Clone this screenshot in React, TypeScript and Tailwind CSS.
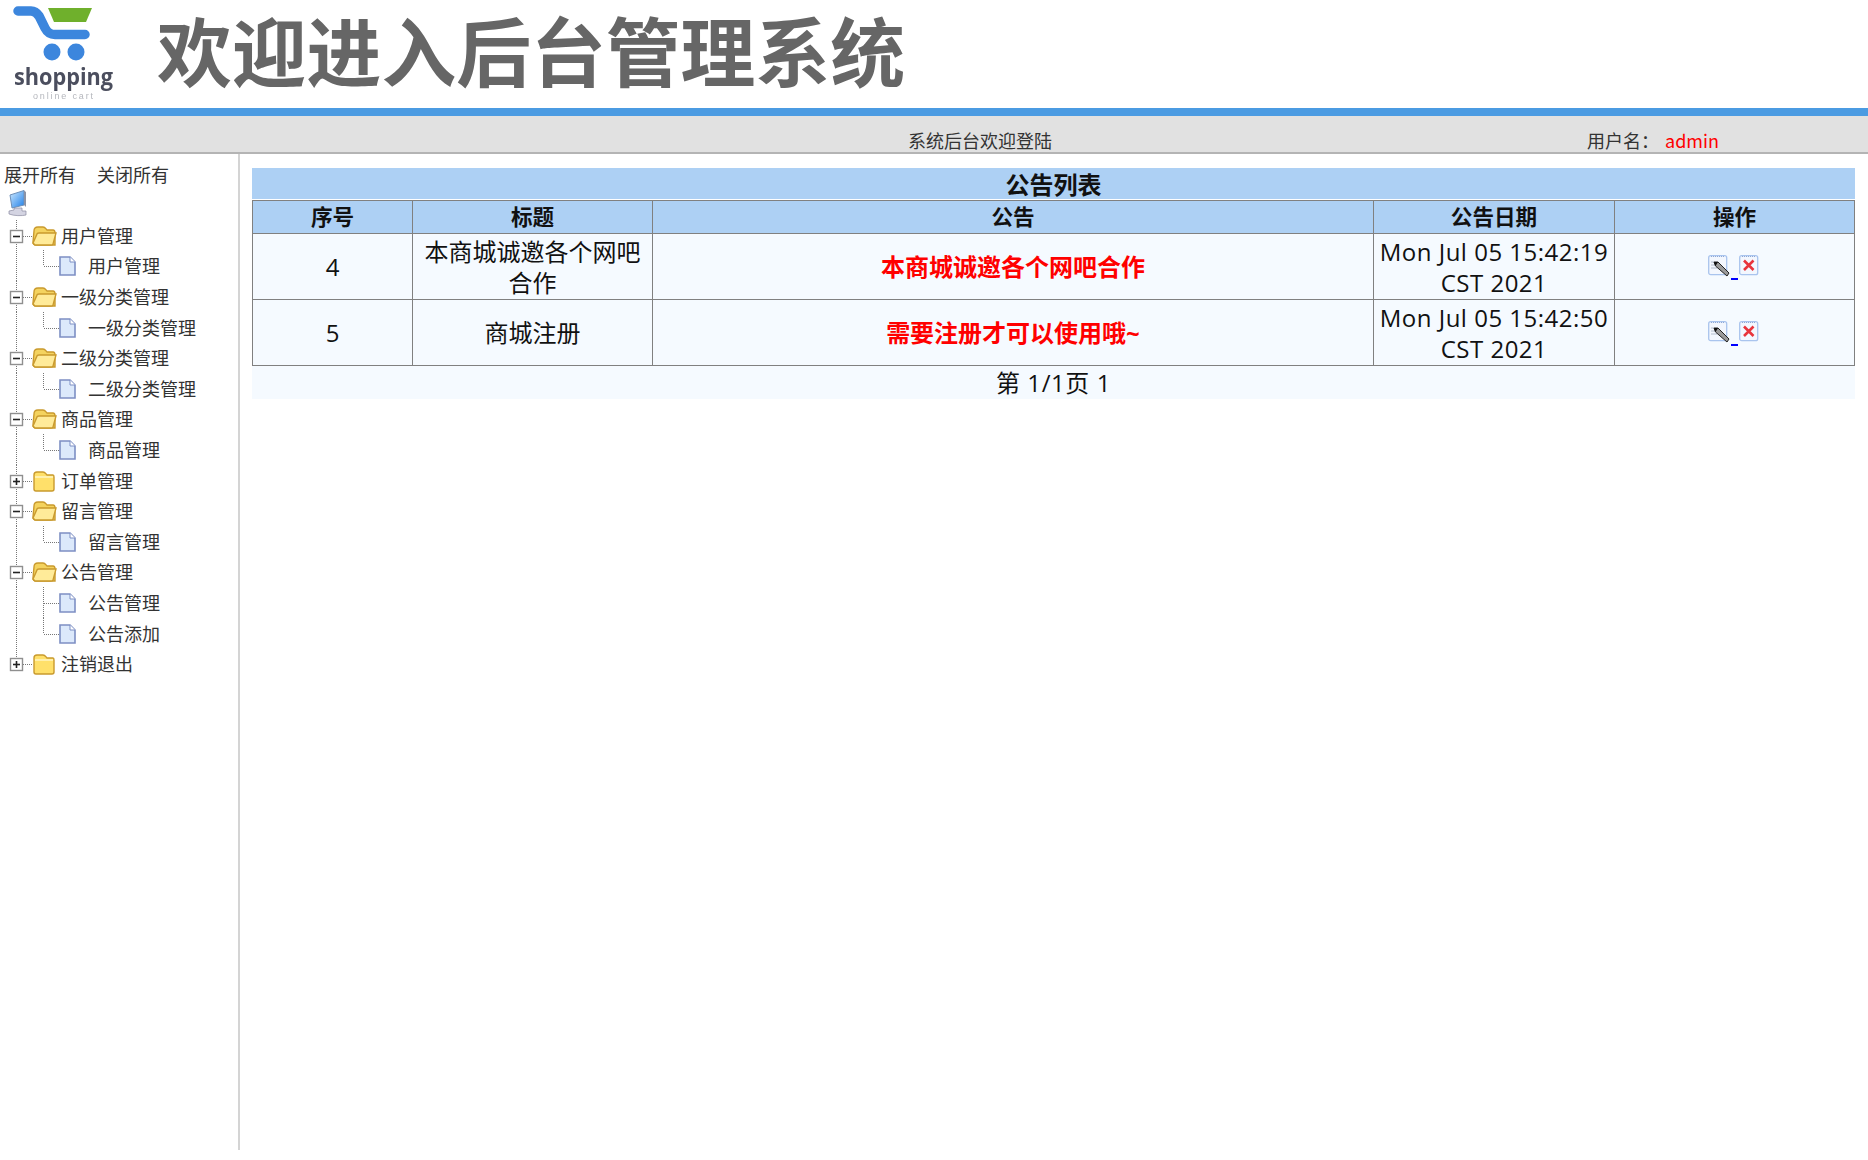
import React from 'react';

const CJK = 'font-["Noto_Sans_CJK_SC","Noto_Sans",sans-serif]';

function Logo() {
    return (
        <svg width="130" height="108" viewBox="0 0 130 108" className="shrink-0 blur-[0.4px]">
            <path d="M48 8H92L86 22H54Z" fill="#6fb02c" />
            <path d="M18 11H31C35 11 37 13 39 16L45 28C47 32 50 34.5 55 34.5H85" fill="none" stroke="#3c86dd" strokeWidth="9.5" strokeLinecap="round" />
            <circle cx="52" cy="52" r="8.5" fill="#3c86dd" />
            <circle cx="76" cy="52" r="8.5" fill="#3c86dd" />
            <text x="14" y="85" fontFamily="Open Sans" fontWeight="700" fontSize="23.5" fill="#4b4e5e" textLength="99" lengthAdjust="spacingAndGlyphs">shopping</text>
            <text x="33" y="99" fontFamily="Liberation Sans" fontSize="9" fill="#b5b7bd" textLength="60">online cart</text>
        </svg>
    );
}

function Computer() {
    return (
        <svg width="20" height="27" viewBox="0 0 20 27">
            <defs>
                <linearGradient id="scr" x1="0" y1="0" x2="1" y2="1">
                    <stop offset="0" stopColor="#cfeaff" />
                    <stop offset="1" stopColor="#1f7fe8" />
                </linearGradient>
            </defs>
            <path d="M2 5L16 0.5V15L4 18Z" fill="url(#scr)" stroke="#6d8fb8" strokeWidth="1" />
            <path d="M16 0.5L18 2V17L16 15Z" fill="#8b93a6" />
            <path d="M6 18H14V21H18V25C14 26 6 26 1 24V21L6 20Z" fill="#d4d4e2" stroke="#8b8ba0" strokeWidth="0.7" />
        </svg>
    );
}

function Folder({ open }: { open: boolean }) {
    return open ? (
        <g>
            <path d="M34 11C34 8 36 7 38 7H43C45 7 46 9 47 10H53C54 10 55 11 55 13V25H36C34 25 33 24 33 22Z" fill="#f4d35f" stroke="#c99a2e" strokeWidth="1.4" />
            <path d="M33 23L37 14C37 13 38 13 39 13H56L53 24C53 25 52 25 51 25H35Z" fill="#ffeb99" stroke="#c99a2e" strokeWidth="1.4" />
        </g>
    ) : (
        <g>
            <path d="M34 10C34 8 35 7 37 7H43C45 7 46 9 47 10H53C54 10 54 11 54 12V24C54 25 53 26 52 26H36C35 26 34 25 34 24Z" fill="#ffe06a" stroke="#c99a2e" strokeWidth="1.4" />
            <path d="M35 12H53" stroke="#fff6c4" strokeWidth="1.5" />
        </g>
    );
}

function GroupRow({ label, open, last }: { label: string; open: boolean; last?: boolean }) {
    return (
        <div className="flex h-[30.6px] items-center">
            <svg width="61" height="31" viewBox="0 0 61 31" className="shrink-0">
                <path d={last ? 'M16.5 0V15' : 'M16.5 0V31'} stroke="#777" strokeDasharray="1 1" />
                <path d="M23 16.5H33" stroke="#777" strokeDasharray="1 1" />
                <rect x="10.5" y="10.5" width="12" height="12" fill="#fff" stroke="#8f8f8f" strokeWidth="1.4" />
                <path d="M13 16.5H20" stroke="#222" strokeWidth="1.6" />
                {!open && <path d="M16.5 13V20" stroke="#222" strokeWidth="1.6" />}
                <Folder open={open} />
            </svg>
            <span className="whitespace-nowrap">{label}</span>
        </div>
    );
}

function PageRow({ label, more }: { label: string; more?: boolean }) {
    return (
        <div className="flex h-[30.6px] items-center">
            <svg width="88" height="31" viewBox="0 0 88 31" className="shrink-0">
                <path d="M16.5 0V31" stroke="#777" strokeDasharray="1 1" />
                <path d={more ? 'M43.5 0V31' : 'M43.5 0V16'} stroke="#777" strokeDasharray="1 1" />
                <path d="M44 16.5H59" stroke="#777" strokeDasharray="1 1" />
                <path d="M60 7H70L75 12V25H60Z" fill="#dce9fb" stroke="#7d8fc4" strokeWidth="1.6" />
                <path d="M70 7V12H75" fill="#fff" stroke="#7d8fc4" strokeWidth="1" />
            </svg>
            <span className="whitespace-nowrap">{label}</span>
        </div>
    );
}

function Sidebar() {
    return (
        <aside className="h-[996px] w-[240px] shrink-0 border-r-2 border-[#d4d4d4] text-[18px] text-[#333]">
            <div className="flex gap-[21px] pl-1 pt-[6px] leading-[28px]">
                <span>展开所有</span>
                <span>关闭所有</span>
            </div>
            <div className="h-[32px] pl-[8px] pt-[2px]">
                <Computer />
            </div>
            <GroupRow label="用户管理" open />
            <PageRow label="用户管理" />
            <GroupRow label="一级分类管理" open />
            <PageRow label="一级分类管理" />
            <GroupRow label="二级分类管理" open />
            <PageRow label="二级分类管理" />
            <GroupRow label="商品管理" open />
            <PageRow label="商品管理" />
            <GroupRow label="订单管理" open={false} />
            <GroupRow label="留言管理" open />
            <PageRow label="留言管理" />
            <GroupRow label="公告管理" open />
            <PageRow label="公告管理" more />
            <PageRow label="公告添加" />
            <GroupRow label="注销退出" open={false} last />
        </aside>
    );
}

function ActionIcons() {
    return (
        <div className="flex items-start justify-center pr-[2px]">
            <svg width="22" height="24" viewBox="0 0 22 24">
                <rect x="0.7" y="1.7" width="18" height="19" rx="2" fill="#f3f7fe" stroke="#a9c4ee" strokeWidth="1.3" />
                <path d="M3 2.5H17" stroke="#8fa8d4" strokeDasharray="1 1" />
                <path d="M3 8H6M3 11H7M3 14H9" stroke="#b4bdcc" />
                <path d="M6 8L10 8L21 19L19 22L7.5 12Z" fill="#9a9a9a" stroke="#222" strokeWidth="1" />
                <path d="M6 8L10 8L7.5 12Z" fill="#111" />
            </svg>
            <span className="mt-[24px] h-[2px] w-[7px] ml-[1px] bg-[#0000ff]" />
            <svg width="20" height="22" viewBox="0 0 20 22" className="ml-[1px]">
                <rect x="0.7" y="1.7" width="18" height="19" rx="2" fill="#f3f7fe" stroke="#a9c4ee" strokeWidth="1.3" />
                <path d="M3 2.5H17" stroke="#8fa8d4" strokeDasharray="1 1" />
                <path d="M5 6.5L14.5 16M14.5 6.5L5 16" stroke="#e8343c" strokeWidth="2.6" />
            </svg>
        </div>
    );
}

const rows = [
    { id: 4, title: '本商城诚邀各个网吧合作', body: '本商城诚邀各个网吧合作', date: 'Mon Jul 05 15:42:19 CST 2021' },
    { id: 5, title: '商城注册', body: '需要注册才可以使用哦~', date: 'Mon Jul 05 15:42:50 CST 2021' },
];

function NoticeTable() {
    const th = 'border border-[#808080] font-bold text-[21.6px] leading-[32px]';
    const td = 'border border-[#808080] text-center align-middle p-0';
    return (
        <main className='ml-[12px] w-[1603px] pt-[14px] font-["Open_Sans","Noto_Sans_CJK_SC",sans-serif] text-[24px] leading-[31px] text-[#111]'>
            <div className="h-[31px] bg-[#add0f4] text-center text-[24px] font-bold leading-[33px]">公告列表</div>
            <table className="mt-[1px] w-full table-fixed border-collapse">
                <colgroup>
                    <col className="w-[160px]" />
                    <col className="w-[240px]" />
                    <col className="w-[721px]" />
                    <col className="w-[241px]" />
                    <col className="w-[240px]" />
                </colgroup>
                <thead>
                    <tr className="h-[33px] bg-[#add0f4]">
                        <th className={th}>序号</th>
                        <th className={th}>标题</th>
                        <th className={th}>公告</th>
                        <th className={th}>公告日期</th>
                        <th className={th}>操作</th>
                    </tr>
                </thead>
                <tbody>
                    {rows.map((row) => (
                        <tr key={row.id} className="h-[66px] bg-[#f5faff]">
                            <td className={td}>{row.id}</td>
                            <td className={`${td} px-[8px]`}>{row.title}</td>
                            <td className={`${td} font-bold text-[#ff0000]`}>{row.body}</td>
                            <td className={`${td} px-[2px] tracking-[0.5px]`}>{row.date}</td>
                            <td className={td}><ActionIcons /></td>
                        </tr>
                    ))}
                </tbody>
            </table>
            <div className="h-[33px] bg-[#f5faff] text-center leading-[33px] tracking-[0.6px]">第 1/1页 1</div>
        </main>
    );
}

export default function App() {
    return (
        <div className={`h-[1160px] w-[1868px] overflow-hidden bg-white ${CJK}`}>
            <header className="flex h-[108px] bg-white">
                <Logo />
                <div className="ml-[27px] whitespace-nowrap text-[74.8px] font-semibold leading-[98px] text-[#666] blur-[0.5px]">
                    欢迎进入后台管理系统
                </div>
            </header>
            <div className="h-[8px] bg-[#4b9be2]" />
            <div className="flex h-[38px] items-center border-b-2 border-[#b4b4b4] bg-[#e1e1e1] pt-[12px] text-[18px] text-[#333]">
                <span className="ml-[908px]">系统后台欢迎登陆</span>
                <span className="ml-[535px]">用户名：</span>
                <span className="ml-[6px] text-[#ff0000]">admin</span>
            </div>
            <div className="flex">
                <Sidebar />
                <NoticeTable />
            </div>
        </div>
    );
}
